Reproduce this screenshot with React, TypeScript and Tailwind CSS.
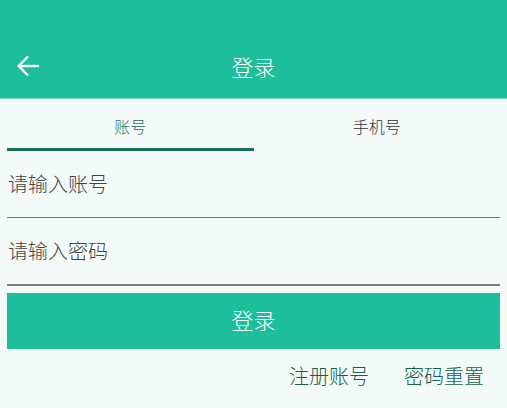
import React from "react";

export default function App() {
  const font = { fontFamily: '"Noto Sans CJK SC", "Noto Sans", sans-serif' };
  return (
    <div className="w-[507px] h-[408px] bg-[#f4faf7] overflow-hidden font-light" style={font}>
      <div className="h-[99px] bg-[#1cbe9c] border-b border-[#74d6c0] pt-[34px]">
        <div className="relative h-[64px] flex items-center justify-center">
          <svg className="absolute left-[16px] top-[20px]" width="24" height="24" viewBox="0 0 24 24" fill="none" stroke="white" strokeWidth="2.4">
            <path d="M23 12H3" />
            <path d="M12 2.5L2.7 12L12 21.5" />
          </svg>
          <span className="text-white text-[22px] leading-none">登录</span>
        </div>
      </div>
      <div className="px-[7px]">
        <div className="flex h-[52px]">
          <div className="flex-1 flex flex-col">
            <div className="flex-1 flex items-center justify-center text-[16px] text-[#246f5e] pt-[4px]">账号</div>
            <div className="h-[3px] bg-[#17705c]" />
          </div>
          <div className="flex-1 flex flex-col">
            <div className="flex-1 flex items-center justify-center text-[16px] text-[#333] pt-[4px]">手机号</div>
            <div className="h-[3px]" />
          </div>
        </div>
        <div className="h-[67px] flex items-center border-b border-[#777] text-[20px] text-[#444]">
          <span className="pl-[1px]">请输入账号</span>
        </div>
        <div className="h-[68px] flex items-center border-b-2 border-[#7d7d7d] text-[20px] text-[#444]">
          <span className="pl-[1px]">请输入密码</span>
        </div>
        <div className="mt-[7px] h-[56px] bg-[#1cbe9c] flex items-center justify-center text-white text-[22px] pb-[3px]">
          登录
        </div>
        <div className="flex justify-end gap-[35px] pr-[16px] pt-[12px] text-[20px] text-[#12604e]">
          <span>注册账号</span>
          <span>密码重置</span>
        </div>
      </div>
    </div>
  );
}
